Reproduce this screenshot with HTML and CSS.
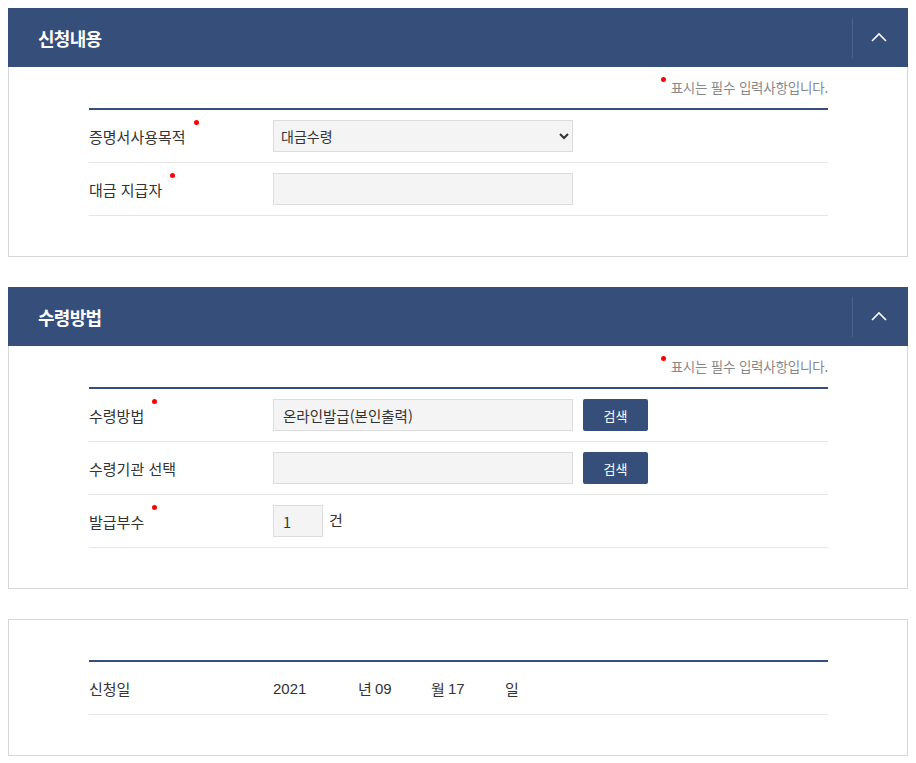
FILE: index.html
```html
<!DOCTYPE html>
<html lang="ko">
<head>
<meta charset="utf-8">
<link rel="stylesheet" href="styles.css">
</head>
<body>
<section class="box">
  <div class="box-head">
    <h2 class="box-title">신청내용</h2>
    <button class="toggle" type="button"><svg width="16" height="10" viewBox="0 0 16 10"><path d="M1 9 L8 2 L15 9" fill="none" stroke="#fff" stroke-width="1.6"/></svg></button>
  </div>
  <div class="box-body">
    <p class="note"><span class="dot"></span>표시는 필수 입력사항입니다.</p>
    <div class="table">
      <div class="row">
        <div class="label"><span class="req">증명서사용목적</span></div>
        <div class="field">
          <select class="select"><option>대금수령</option></select>
        </div>
      </div>
      <div class="row">
        <div class="label"><span class="req">대금 지급자</span></div>
        <div class="field"><input class="input" type="text"></div>
      </div>
    </div>
  </div>
</section>

<section class="box">
  <div class="box-head">
    <h2 class="box-title">수령방법</h2>
    <button class="toggle" type="button"><svg width="16" height="10" viewBox="0 0 16 10"><path d="M1 9 L8 2 L15 9" fill="none" stroke="#fff" stroke-width="1.6"/></svg></button>
  </div>
  <div class="box-body">
    <p class="note"><span class="dot"></span>표시는 필수 입력사항입니다.</p>
    <div class="table">
      <div class="row">
        <div class="label"><span class="req">수령방법</span></div>
        <div class="field">
          <input class="input" type="text" value="온라인발급(본인출력)" readonly>
          <button class="btn" type="button">검색</button>
        </div>
      </div>
      <div class="row">
        <div class="label"><span>수령기관 선택</span></div>
        <div class="field">
          <input class="input" type="text" readonly>
          <button class="btn" type="button">검색</button>
        </div>
      </div>
      <div class="row">
        <div class="label"><span class="req">발급부수</span></div>
        <div class="field">
          <input class="input small" type="text" value="1">
          <span class="unit">건</span>
        </div>
      </div>
    </div>
  </div>
</section>

<section class="box plain">
  <div class="box-body">
    <div class="table">
      <div class="row">
        <div class="label"><span>신청일</span></div>
        <div class="field date">
          <span class="dv y">2021</span><span class="du">년</span>
          <span class="dv m">09</span><span class="du">월</span>
          <span class="dv d">17</span><span class="du">일</span>
        </div>
      </div>
    </div>
  </div>
</section>
</body>
</html>
```

FILE: styles.css
```css
* { box-sizing: border-box; }
body {
  margin: 8px;
  font-family: "Noto Sans CJK KR", "Noto Sans", sans-serif;
  color: #333;
  background: #fff;
}
.box {
  border: 1px solid #d6d6d6;
  margin-bottom: 30px;
  width: 900px;
}
.box-head {
  height: 59px;
  margin: -1px -1px 0;
  background: #354e7a;
  display: flex;
  align-items: center;
  justify-content: space-between;
}
.box-title {
  margin: 0 0 0 30px;
  color: #fff;
  font-size: 18px;
  font-weight: 700;
  letter-spacing: -0.7px;
}
.toggle {
  height: 40px;
  width: 56px;
  border: 0;
  border-left: 1px solid #4b628b;
  background: transparent;
  display: flex;
  align-items: center;
  justify-content: center;
  padding: 0 4px 2px 0;
}
.box-body {
  padding: 10px 79px 40px 80px;
}
.plain .box-body { padding-top: 40px; }
.note {
  margin: 0 0 11px;
  text-align: right;
  font-size: 13.5px;
  line-height: 20px;
  color: #888;
  letter-spacing: -0.2px;
}
.note .dot {
  display: inline-block;
  width: 5px;
  height: 5px;
  border-radius: 50%;
  background: #f00;
  vertical-align: top;
  margin: 0 5px 0 0;
}
.table {
  border-top: 2px solid #354e7a;
}
.row {
  display: flex;
  align-items: center;
  padding: 10px 0;
  border-bottom: 1px solid #e6e6e6;
  min-height: 53px;
}
.label {
  width: 184px;
  flex: none;
  font-size: 15px;
  color: #333;
}
.req { position: relative; }
.req::after {
  content: "";
  position: absolute;
  right: -13px;
  top: -6px;
  width: 5px;
  height: 5px;
  border-radius: 50%;
  background: #f00;
}
.field {
  display: flex;
  align-items: center;
  gap: 10px;
}
.select, .input {
  width: 300px;
  height: 32px;
  border: 1px solid #dcdcdc;
  background: #f4f4f4;
  font-family: inherit;
  font-size: 14px;
  color: #333;
  padding: 0 6px;
  border-radius: 0;
  outline: none;
}
.select { padding-left: 3px; }
.input { padding-left: 9px; font-size: 14.5px; }
.input.small { width: 50px; }
.unit { font-size: 15px; margin-left: -4px; margin-top: -4px; }
.btn {
  width: 65px;
  height: 32px;
  border: 0;
  border-radius: 2px;
  background: #354e7a;
  color: #fff;
  font-family: inherit;
  font-size: 13px;
}
.date { gap: 0; font-size: 15px; }
.dv { font-size: 15px; color: #333; font-family: "Liberation Sans", sans-serif; }
.y { width: 85px; }
.m { width: 56px; }
.d { width: 57px; }
.du { width: 17px; }
```
